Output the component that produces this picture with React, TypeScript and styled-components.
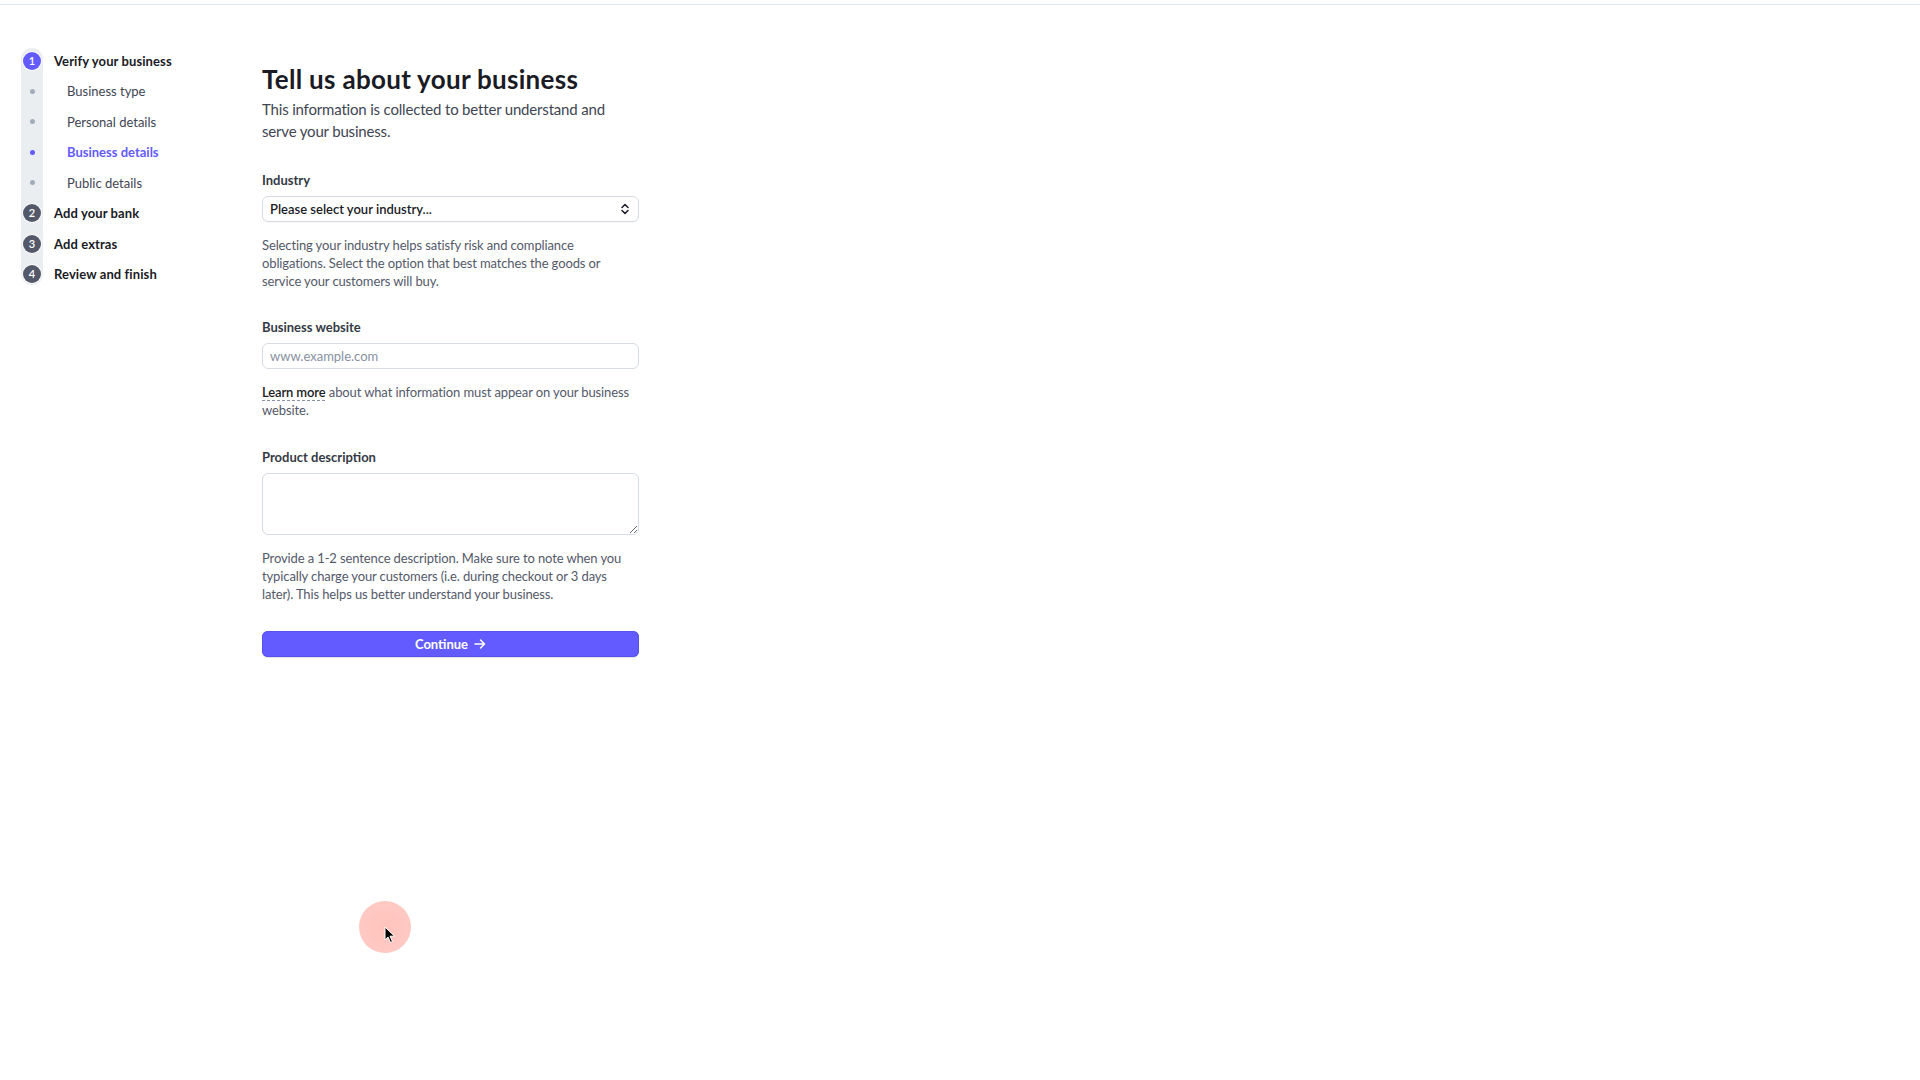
import React from "react";
import styled, { createGlobalStyle } from "styled-components";

const GlobalStyle = createGlobalStyle`
  html, body {
    margin: 0;
    padding: 0;
    background: #ffffff;
    font-family: Lato, "Noto Sans", sans-serif;
    color: #1a1b25;
  }
  * { box-sizing: border-box; }
`;

const Page = styled.div`
  position: relative;
  min-height: 1080px;
  width: 1920px;
`;

const TopRule = styled.div`
  height: 5px;
  border-bottom: 1px solid #e1e7ef;
`;

const Layout = styled.div`
  display: flex;
  align-items: flex-start;
`;

const Sidebar = styled.nav`
  width: 262px;
  padding: 40.8px 0 0 21px;
`;

const StepList = styled.ol`
  position: relative;
  list-style: none;
  margin: 0;
  padding: 0;
  &::before {
    content: "";
    position: absolute;
    left: 0;
    top: 2px;
    bottom: 4px;
    width: 22px;
    border-radius: 11px;
    background: #ebeef1;
  }
`;

const StepRow = styled.li<{ $sub?: boolean }>`
  position: relative;
  display: grid;
  grid-template-columns: 22px 1fr;
  column-gap: ${(p) => (p.$sub ? "24px" : "11px")};
  align-items: center;
  height: 30.45px;
`;

const Marker = styled.span`
  display: flex;
  align-items: center;
  justify-content: center;
`;

const NumberBadge = styled.span<{ $active?: boolean }>`
  width: 18px;
  height: 18px;
  border-radius: 50%;
  background: ${(p) => (p.$active ? "#635bff" : "#545969")};
  color: #ffffff;
  font-size: 11px;
  font-weight: 600;
  line-height: 18px;
  text-align: center;
  box-shadow: 0 0 0 1px rgba(255, 255, 255, 0.7);
`;

const Dot = styled.span<{ $active?: boolean }>`
  width: 5px;
  height: 5px;
  border-radius: 50%;
  background: ${(p) => (p.$active ? "#635bff" : "#a3acba")};
`;

const StepLabel = styled.span<{ $sub?: boolean; $active?: boolean }>`
  font-size: 13px;
  font-weight: ${(p) => (!p.$sub || p.$active ? 700 : 400)};
  letter-spacing: ${(p) => (!p.$sub ? "0.1px" : "0")};
  color: ${(p) => (p.$active ? "#635bff" : p.$sub ? "#414552" : "#1a1b25")};
  white-space: nowrap;
`;

const Main = styled.main`
  width: 377px;
  padding-top: 57.7px;
`;

const Title = styled.h1`
  margin: 0;
  font-size: 26px;
  line-height: 32px;
  font-weight: 700;
  letter-spacing: 0.3px;
  color: #1a1b25;
`;

const Subtitle = styled.p`
  margin: 3px 0 0;
  font-size: 15px;
  line-height: 22px;
  letter-spacing: -0.18px;
  color: #414552;
`;

const Form = styled.form`
  margin-top: 29px;
  display: flex;
  flex-direction: column;
  gap: 28.5px;
`;

const Field = styled.div`
  display: flex;
  flex-direction: column;
`;

const Label = styled.label`
  font-size: 13px;
  line-height: 18px;
  font-weight: 700;
  color: #353a44;
  margin-bottom: 7px;
`;

const SelectBox = styled.div`
  position: relative;
  height: 26px;
  display: flex;
  align-items: center;
  justify-content: space-between;
  padding: 0 9px 0 7px;
  border: 1px solid #d5dbe1;
  border-radius: 6px;
  background: #ffffff;
  box-shadow: 0 1px 1px rgba(0, 0, 0, 0.03);
  font-size: 13px;
  font-weight: 600;
  color: #1a1b25;
`;

const TextInput = styled.input`
  height: 26px;
  padding: 0 7px;
  border: 1px solid #d5dbe1;
  border-radius: 6px;
  background: #ffffff;
  font-family: inherit;
  font-size: 13px;
  color: #1a1b25;
  outline: none;
  &::placeholder {
    color: #87909f;
  }
`;

const TextArea = styled.textarea`
  height: 62px;
  padding: 5px 7px;
  border: 1px solid #d5dbe1;
  border-radius: 6px;
  background: #ffffff;
  font-family: inherit;
  font-size: 13px;
  color: #1a1b25;
  outline: none;
  resize: vertical;
`;

const Help = styled.p`
  margin: 14px 0 0;
  font-size: 13px;
  line-height: 18px;
  letter-spacing: -0.12px;
  color: #545969;
`;

const LearnMore = styled.a`
  color: #1a1b25;
  font-weight: 600;
  text-decoration: underline dashed #8a93a3;
  text-decoration-thickness: 1px;
  text-underline-offset: 3px;
`;

const ContinueButton = styled.button`
  height: 26px;
  width: 100%;
  display: flex;
  align-items: center;
  justify-content: center;
  gap: 6px;
  border: none;
  border-radius: 6px;
  background: #635bff;
  color: #ffffff;
  font-family: inherit;
  font-size: 13px;
  font-weight: 700;
  box-shadow: 0 1px 1px rgba(64, 68, 82, 0.16), inset 0 0 0 1px #5851ec;
  cursor: pointer;
`;

const CursorHalo = styled.div`
  position: absolute;
  left: 359px;
  top: 901px;
  width: 52px;
  height: 52px;
  border-radius: 50%;
  background: radial-gradient(circle, rgba(255, 184, 176, 0.85) 0%, rgba(255, 188, 181, 0.8) 74%, rgba(255, 210, 205, 0) 100%);
  pointer-events: none;
`;

const CursorArrow = styled.svg`
  position: absolute;
  left: 25px;
  top: 25px;
`;

const ChevronUpDown = () => (
  <svg width="8" height="12" viewBox="0 0 8 12" fill="none">
    <path d="M1 4.5 L4 1.5 L7 4.5" stroke="#1a1b25" strokeWidth="1.5" strokeLinecap="round" strokeLinejoin="round" />
    <path d="M1 7.5 L4 10.5 L7 7.5" stroke="#1a1b25" strokeWidth="1.5" strokeLinecap="round" strokeLinejoin="round" />
  </svg>
);

const ArrowRight = () => (
  <svg width="12" height="12" viewBox="0 0 12 12" fill="none">
    <path d="M1 6 H10.5 M6.5 2 L10.5 6 L6.5 10" stroke="#ffffff" strokeWidth="1.5" strokeLinecap="round" strokeLinejoin="round" />
  </svg>
);

type Step = { kind: "step"; n: number; label: string; active?: boolean } | { kind: "sub"; label: string; active?: boolean };

const steps: Step[] = [
  { kind: "step", n: 1, label: "Verify your business", active: true },
  { kind: "sub", label: "Business type" },
  { kind: "sub", label: "Personal details" },
  { kind: "sub", label: "Business details", active: true },
  { kind: "sub", label: "Public details" },
  { kind: "step", n: 2, label: "Add your bank" },
  { kind: "step", n: 3, label: "Add extras" },
  { kind: "step", n: 4, label: "Review and finish" },
];

export default function App() {
  return (
    <Page>
      <GlobalStyle />
      <TopRule />
      <Layout>
        <Sidebar>
          <StepList>
            {steps.map((s, i) =>
              s.kind === "step" ? (
                <StepRow key={i}>
                  <Marker>
                    <NumberBadge $active={s.active}>{s.n}</NumberBadge>
                  </Marker>
                  <StepLabel>{s.label}</StepLabel>
                </StepRow>
              ) : (
                <StepRow key={i} $sub>
                  <Marker>
                    <Dot $active={s.active} />
                  </Marker>
                  <StepLabel $sub $active={s.active}>
                    {s.label}
                  </StepLabel>
                </StepRow>
              )
            )}
          </StepList>
        </Sidebar>
        <Main>
          <Title>Tell us about your business</Title>
          <Subtitle>This information is collected to better understand and serve your business.</Subtitle>
          <Form onSubmit={(e) => e.preventDefault()}>
            <Field>
              <Label>Industry</Label>
              <SelectBox>
                <span>Please select your industry...</span>
                <ChevronUpDown />
              </SelectBox>
              <Help>
                Selecting your industry helps satisfy risk and compliance obligations. Select the option that best matches the goods or service your customers will buy.
              </Help>
            </Field>
            <Field>
              <Label>Business website</Label>
              <TextInput placeholder="www.example.com" />
              <Help>
                <LearnMore href="#">Learn more</LearnMore> about what information must appear on your business website.
              </Help>
            </Field>
            <Field>
              <Label>Product description</Label>
              <TextArea />
              <Help>
                Provide a 1-2 sentence description. Make sure to note when you typically charge your customers (i.e. during checkout or 3 days later). This helps us better understand your business.
              </Help>
            </Field>
            <ContinueButton type="submit">
              Continue
              <ArrowRight />
            </ContinueButton>
          </Form>
        </Main>
      </Layout>
      <CursorHalo>
        <CursorArrow width="12" height="18" viewBox="0 0 12 18">
          <path d="M1 1 L1 14 L4 11 L6.5 16.5 L8.5 15.5 L6 10.2 L10.5 10.2 Z" fill="#000000" stroke="#ffffff" strokeWidth="1" strokeLinejoin="round" />
        </CursorArrow>
      </CursorHalo>
    </Page>
  );
}
